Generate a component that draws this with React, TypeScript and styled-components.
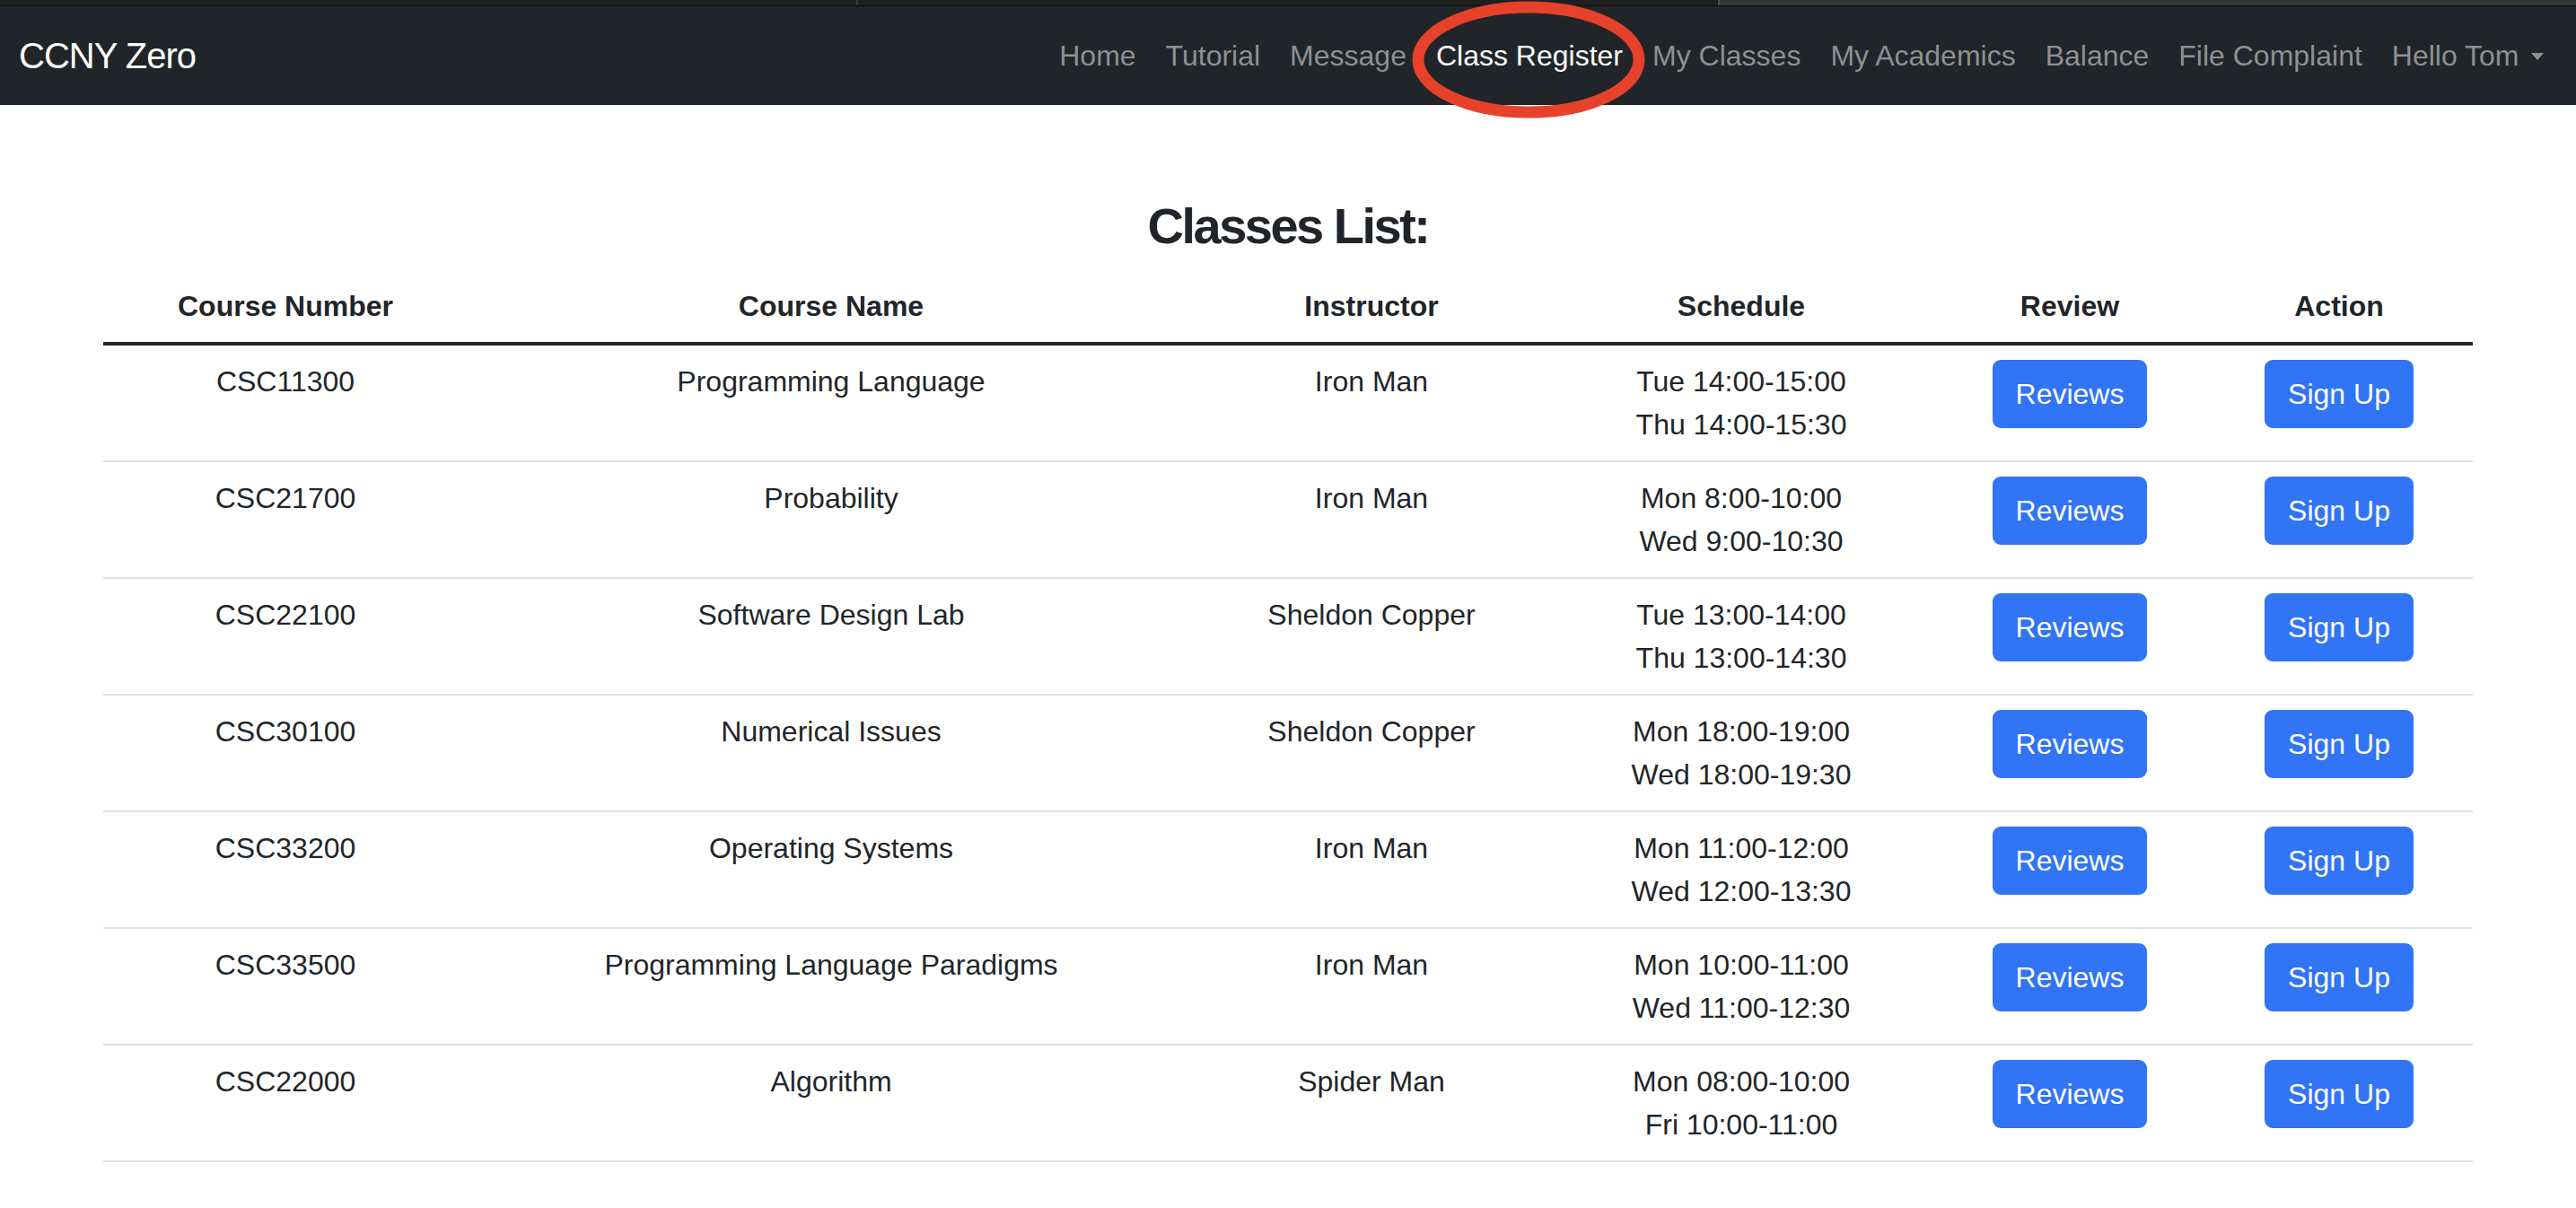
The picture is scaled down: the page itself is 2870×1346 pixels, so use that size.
import React from "react";
import styled, { createGlobalStyle } from "styled-components";

const GlobalStyle = createGlobalStyle`
  html, body {
    margin: 0;
    padding: 0;
    background: #ffffff;
  }
  body {
    font-family: "Liberation Sans", Arial, Helvetica, sans-serif;
    color: #212529;
  }
  * { box-sizing: border-box; }
`;

const Page = styled.div`
  position: relative;
  min-height: 1346px;
  background: #ffffff;
`;

const TopStrip = styled.div`
  display: flex;
  height: 7px;
  border-bottom: 1px solid #0b0b0b;
`;

const StripSegment = styled.div<{ $tone: "dark" | "light"; $width?: number }>`
  height: 100%;
  flex: ${(p) => (p.$width ? `0 0 ${p.$width}px` : "1 1 auto")};
  background: ${(p) => (p.$tone === "dark" ? "#1f1f1f" : "#363636")};
`;

const StripDivider = styled.div<{ $light?: boolean }>`
  flex: 0 0 2px;
  height: 100%;
  background: ${(p) => (p.$light ? "#4d4d4d" : "#3e3e3e")};
`;

const Navbar = styled.nav`
  display: flex;
  align-items: center;
  justify-content: space-between;
  height: 110px;
  padding: 0 20px 0 21px;
  background: #212529;
`;

const Brand = styled.a`
  font-size: 40px;
  line-height: 60px;
  letter-spacing: -1px;
  color: #ffffff;
  text-decoration: none;
  white-space: nowrap;
`;

const NavList = styled.ul`
  display: flex;
  align-items: center;
  list-style: none;
  margin: 0;
  padding: 0;
`;

const NavLink = styled.a<{ $active?: boolean }>`
  display: flex;
  align-items: center;
  padding: 16px 16.5px;
  font-size: 32px;
  line-height: 48px;
  color: ${(p) => (p.$active ? "#ffffff" : "#8e9093")};
  text-decoration: none;
  white-space: nowrap;
`;

const Caret = styled.span`
  display: inline-block;
  width: 0;
  height: 0;
  margin-left: 13px;
  margin-top: 2px;
  border-left: 7.5px solid transparent;
  border-right: 7.5px solid transparent;
  border-top: 8px solid #8e9093;
`;

const Annotation = styled.svg`
  position: absolute;
  left: 1569px;
  top: 0;
  width: 268px;
  height: 136px;
  pointer-events: none;
  overflow: visible;
`;

const Main = styled.main`
  width: 2640px;
  margin: 0 auto;
`;

const Title = styled.h3`
  margin: 101px 0 16px;
  font-size: 56px;
  line-height: 67px;
  font-weight: 700;
  letter-spacing: -2.5px;
  text-align: center;
  color: #212529;
`;

const Table = styled.table`
  width: 2640px;
  border-collapse: collapse;
  table-layout: fixed;
  vertical-align: top;
`;

const HeadCell = styled.th`
  padding: 16px;
  font-size: 32px;
  line-height: 48px;
  font-weight: 700;
  text-align: center;
  color: #212529;
  border-bottom: 4px solid #212529;
`;

const Cell = styled.td`
  padding: 16px;
  font-size: 32px;
  line-height: 48px;
  text-align: center;
  vertical-align: top;
  color: #212529;
  border-bottom: 2px solid #dee2e6;
`;

const Line = styled.div`
  white-space: nowrap;
`;

const Button = styled.button`
  display: inline-block;
  padding: 12px 24px;
  font-family: "Liberation Sans", Arial, Helvetica, sans-serif;
  font-size: 32px;
  line-height: 48px;
  color: #ffffff;
  background: #3174f5;
  border: 2px solid #3174f5;
  border-radius: 9px;
  cursor: pointer;
`;

type Course = {
  num: string;
  name: string;
  instructor: string;
  schedule: [string, string];
};

const courses: Course[] = [
  { num: "CSC11300", name: "Programming Language", instructor: "Iron Man", schedule: ["Tue 14:00-15:00", "Thu 14:00-15:30"] },
  { num: "CSC21700", name: "Probability", instructor: "Iron Man", schedule: ["Mon 8:00-10:00", "Wed 9:00-10:30"] },
  { num: "CSC22100", name: "Software Design Lab", instructor: "Sheldon Copper", schedule: ["Tue 13:00-14:00", "Thu 13:00-14:30"] },
  { num: "CSC30100", name: "Numerical Issues", instructor: "Sheldon Copper", schedule: ["Mon 18:00-19:00", "Wed 18:00-19:30"] },
  { num: "CSC33200", name: "Operating Systems", instructor: "Iron Man", schedule: ["Mon 11:00-12:00", "Wed 12:00-13:30"] },
  { num: "CSC33500", name: "Programming Language Paradigms", instructor: "Iron Man", schedule: ["Mon 10:00-11:00", "Wed 11:00-12:30"] },
  { num: "CSC22000", name: "Algorithm", instructor: "Spider Man", schedule: ["Mon 08:00-10:00", "Fri 10:00-11:00"] },
];

const navItems = [
  "Home",
  "Tutorial",
  "Message",
  "Class Register",
  "My Classes",
  "My Academics",
  "Balance",
  "File Complaint",
];

const colWidths = [406, 810, 394, 430, 302, 298];
const headers = ["Course Number", "Course Name", "Instructor", "Schedule", "Review", "Action"];

export default function App() {
  return (
    <Page>
      <GlobalStyle />
      <TopStrip>
        <StripSegment $tone="dark" $width={954} />
        <StripDivider />
        <StripSegment $tone="dark" $width={958} />
        <StripDivider $light />
        <StripSegment $tone="light" />
      </TopStrip>
      <Navbar>
        <Brand href="#">CCNY Zero</Brand>
        <NavList>
          {navItems.map((item) => (
            <li key={item}>
              <NavLink href="#" $active={item === "Class Register"}>
                {item}
              </NavLink>
            </li>
          ))}
          <li>
            <NavLink href="#">
              Hello Tom
              <Caret />
            </NavLink>
          </li>
        </NavList>
      </Navbar>
      <Annotation viewBox="0 0 268 136">
        <ellipse cx="134" cy="66.5" rx="123" ry="58.5" fill="none" stroke="#e6412a" strokeWidth="13" />
      </Annotation>
      <Main>
        <Title>Classes List:</Title>
        <Table>
          <colgroup>
            {colWidths.map((w, i) => (
              <col key={i} style={{ width: w }} />
            ))}
          </colgroup>
          <thead>
            <tr>
              {headers.map((h) => (
                <HeadCell key={h}>{h}</HeadCell>
              ))}
            </tr>
          </thead>
          <tbody>
            {courses.map((c) => (
              <tr key={c.num}>
                <Cell>{c.num}</Cell>
                <Cell>{c.name}</Cell>
                <Cell>{c.instructor}</Cell>
                <Cell>
                  <Line>{c.schedule[0]}</Line>
                  <Line>{c.schedule[1]}</Line>
                </Cell>
                <Cell>
                  <Button>Reviews</Button>
                </Cell>
                <Cell>
                  <Button>Sign Up</Button>
                </Cell>
              </tr>
            ))}
          </tbody>
        </Table>
      </Main>
    </Page>
  );
}
